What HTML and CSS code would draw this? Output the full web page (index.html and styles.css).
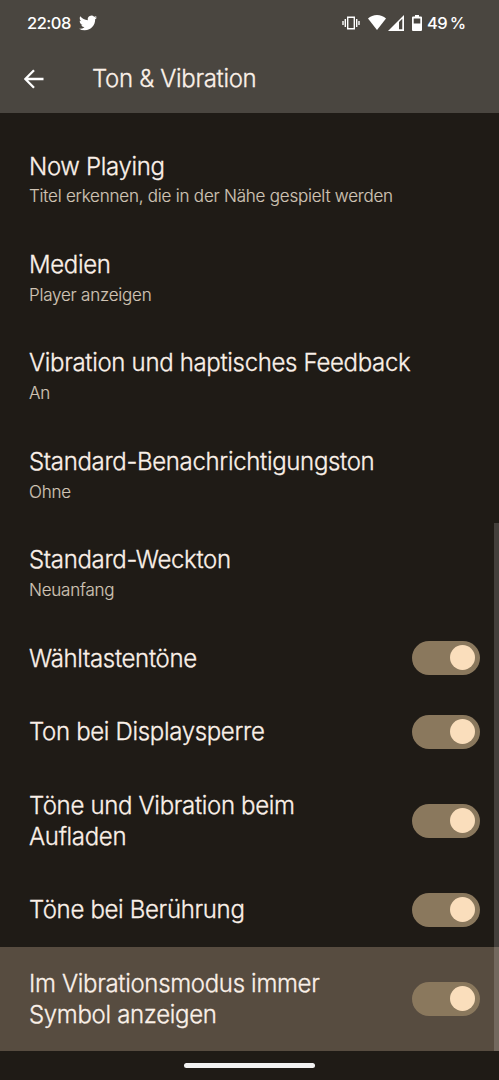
FILE: index.html
```
<!DOCTYPE html>
<html lang="de">
<head>
    <meta charset="UTF-8">
    <meta name="viewport" content="width=device-width, initial-scale=1.0">
    <title>Ton &amp; Vibration</title>
    <link rel="stylesheet" href="styles.css">
</head>
<body>
    <div class="screen">
        <header class="header">
            <div class="status-bar">
                <span class="time">22:08</span>
                <svg class="twitter" viewBox="0 0 24 24"><path d="M23.953 4.57a10 10 0 01-2.825.775 4.958 4.958 0 002.163-2.723c-.951.555-2.005.959-3.127 1.184a4.92 4.92 0 00-8.384 4.482C7.69 8.095 4.067 6.13 1.64 3.162a4.822 4.822 0 00-.666 2.475c0 1.71.87 3.213 2.188 4.096a4.904 4.904 0 01-2.228-.616v.06a4.923 4.923 0 003.946 4.827 4.996 4.996 0 01-2.212.085 4.936 4.936 0 004.604 3.417 9.867 9.867 0 01-6.102 2.105c-.39 0-.779-.023-1.17-.067a13.995 13.995 0 007.557 2.209c9.053 0 13.998-7.496 13.998-13.985 0-.21 0-.42-.015-.63A9.935 9.935 0 0024 4.59z"/></svg>
                <svg class="vibrate" viewBox="0 0 18 14"><path d="M5.7 1.2h6.6v11.6H5.7zM3.3 3v8M14.7 3v8M1 5v4M17 5v4"/></svg>
                <svg class="wifi" viewBox="0 0 18 15"><path d="M9 15 0 3.6C2.400 1.300 5.600 0 9 0s6.600 1.300 9 3.600z"/></svg>
                <svg class="signal" viewBox="0 0 16 16"><path fill-rule="evenodd" d="M16 0v16H0zM11 7v7.300h3.300V3.700z"/></svg>
                <svg class="battery" viewBox="0 0 10 16"><path fill-rule="evenodd" d="M3 0h4v1.600h2q1 0 1 1V15q0 1-1 1H1q-1 0-1-1V2.600q0-1 1-1h2zM1.700 3.400v5h6.600v-5z"/></svg>
                <span class="percent">49&nbsp;%</span>
            </div>
            <div class="toolbar">
                <svg class="back" viewBox="0 0 20 20"><path d="M19.500 10H2M10 1.300 1.300 10l8.700 8.700"/></svg>
                <h1>Ton &amp; Vibration</h1>
            </div>
        </header>

        <main class="settings">
            <div class="row">
                <div class="label">
                    <h2>Now Playing</h2>
                    <p>Titel erkennen, die in der Nähe gespielt werden</p>
                </div>
            </div>
            <div class="row">
                <div class="label">
                    <h2>Medien</h2>
                    <p>Player anzeigen</p>
                </div>
            </div>
            <div class="row">
                <div class="label">
                    <h2>Vibration und haptisches Feedback</h2>
                    <p>An</p>
                </div>
            </div>
            <div class="row">
                <div class="label">
                    <h2>Standard-Benachrichtigungston</h2>
                    <p>Ohne</p>
                </div>
            </div>
            <div class="row">
                <div class="label">
                    <h2>Standard-Weckton</h2>
                    <p>Neuanfang</p>
                </div>
            </div>
            <div class="row">
                <h2>Wähltastentöne</h2>
                <div class="switch"></div>
            </div>
            <div class="row">
                <h2>Ton bei Displaysperre</h2>
                <div class="switch"></div>
            </div>
            <div class="row">
                <h2>Töne und Vibration beim<br>Aufladen</h2>
                <div class="switch"></div>
            </div>
            <div class="row">
                <h2>Töne bei Berührung</h2>
                <div class="switch"></div>
            </div>
            <div class="row highlighted">
                <h2>Im Vibrationsmodus immer<br>Symbol anzeigen</h2>
                <div class="switch"></div>
            </div>
            <div class="scrollbar"></div>
        </main>

        <footer class="nav-bar">
            <div class="handle"></div>
        </footer>
    </div>
</body>
</html>
```
FILE: styles.css
```
* {
    box-sizing: border-box;
}
body {
    margin: 0;
    background-color: #1f1b16;
    color: #faf0e8;
    font-family: Inter, Roboto, sans-serif;
}
.screen {
    display: flex;
    flex-direction: column;
    height: 1080px;
    overflow: hidden;
}
.header {
    height: 113px;
    background-color: #4a4640;
}
.status-bar {
    display: flex;
    align-items: center;
    height: 45px;
    padding: 0 34px 0 27px;
    color: white;
    font-size: 16.5px;
    font-weight: 500;
    letter-spacing: -0.6px;
}
.status-bar svg {
    fill: white;
    flex: none;
}
.time {
    width: 44px;
    letter-spacing: -0.5px;
    white-space: nowrap;
}
.status-bar .twitter {
    width: 18px;
    height: 18px;
    margin-left: 8px;
}
.status-bar .vibrate {
    width: 18px;
    height: 14px;
    margin-left: auto;
    fill: none;
    stroke: white;
    stroke-width: 1.4;
}
.status-bar .wifi {
    width: 18px;
    height: 15px;
    margin-left: 8px;
}
.status-bar .signal {
    width: 16px;
    height: 16px;
    margin-left: 2px;
}
.status-bar .battery {
    width: 10px;
    height: 16px;
    margin-left: 8px;
}
.percent {
    width: 38px;
    margin-left: 5px;
    white-space: nowrap;
    word-spacing: -1px;
}
.toolbar {
    display: flex;
    align-items: center;
    height: 68px;
    padding-left: 24px;
}
.back {
    width: 20px;
    height: 20px;
    fill: none;
    stroke: white;
    stroke-width: 2.3;
}
h1,
h2 {
    margin: 0;
    font-size: 24px;
    font-weight: 300;
    line-height: 30.7px;
    letter-spacing: -0.33px;
    white-space: nowrap;
    -webkit-text-stroke: 0.3px;
}
h1 {
    margin-left: 48px;
    padding-top: 1px;
}
.settings {
    position: relative;
    height: 938px;
    padding-top: 16.1px;
}
.row {
    display: flex;
    align-items: center;
    justify-content: space-between;
    padding: 22.5px 19.5px 20.5px 29px;
}
.row p {
    margin: 4px 0 0;
    color: #d0c4b5;
    font-size: 17px;
    font-weight: 300;
    line-height: 20.7px;
    letter-spacing: -0.22px;
    white-space: nowrap;
    -webkit-text-stroke: 0.15px;
}
.highlighted {
    background-color: #574c40;
}
.switch {
    display: flex;
    align-items: center;
    justify-content: flex-end;
    width: 68px;
    height: 34px;
    margin: -3px 0 -1px;
    padding-right: 4.5px;
    border-radius: 17px;
    background-color: #8a785d;
}
.switch::after {
    content: "";
    width: 25px;
    height: 25px;
    border-radius: 50%;
    background-color: #fadebc;
}
/* lies over the rows at the right edge */
.scrollbar {
    position: absolute;
    right: 0;
    bottom: 0;
    width: 5px;
    height: 528px;
    background-color: rgba(255, 255, 255, 0.16);
}
.nav-bar {
    display: flex;
    justify-content: center;
    height: 29px;
    padding-top: 12px;
}
.handle {
    width: 131px;
    height: 5px;
    border-radius: 3px;
    background-color: #f2f2f2;
}
```
